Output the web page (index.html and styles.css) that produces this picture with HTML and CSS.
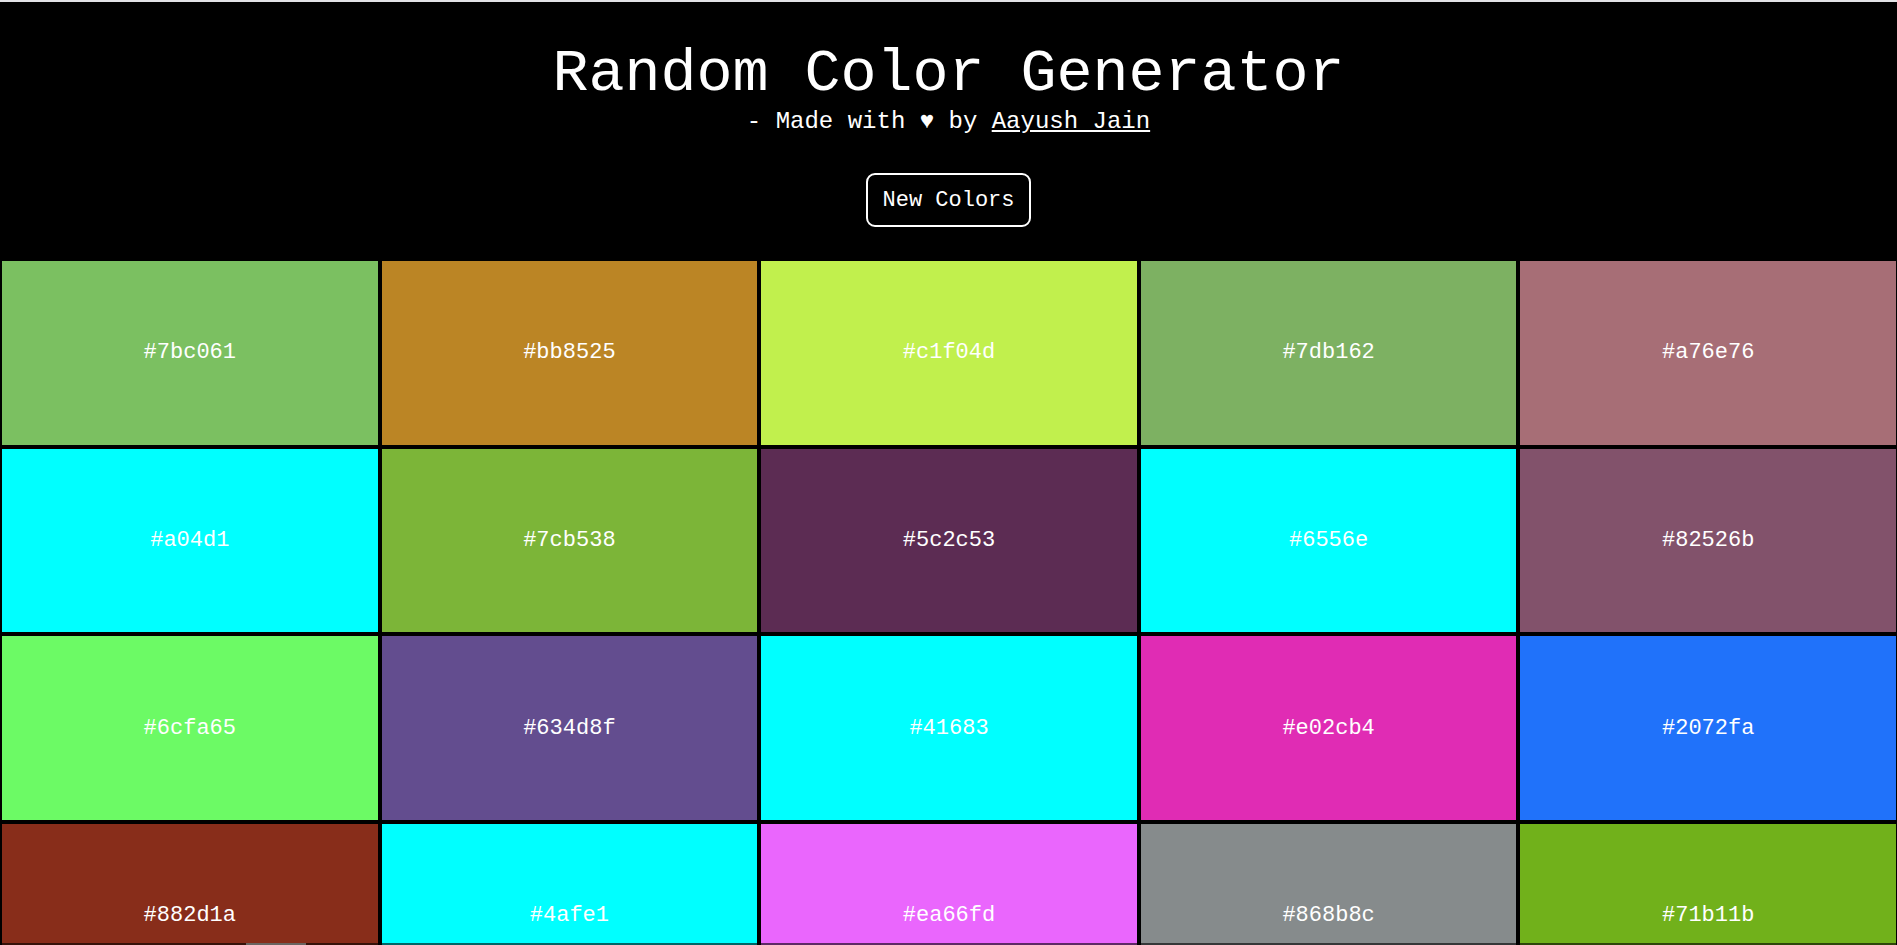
FILE: index.html
```html
<!DOCTYPE html>
<html lang="en">
<head>
<meta charset="utf-8">
<title>Random Color Generator</title>
<link rel="stylesheet" href="styles.css">
</head>
<body>
<header class="header">
  <h1 class="title">Random Color Generator</h1>
  <p class="subtitle">- Made with &#9829; by <a class="author" href="#">Aayush Jain</a></p>
  <button class="new-btn" type="button">New Colors</button>
</header>
<main class="grid">
  <div class="tile" style="background:#7bc061">#7bc061</div>
  <div class="tile" style="background:#bb8525">#bb8525</div>
  <div class="tile" style="background:#c1f04d">#c1f04d</div>
  <div class="tile" style="background:#7db162">#7db162</div>
  <div class="tile" style="background:#a76e76">#a76e76</div>
  <div class="tile" style="background:#00ffff">#a04d1</div>
  <div class="tile" style="background:#7cb538">#7cb538</div>
  <div class="tile" style="background:#5c2c53">#5c2c53</div>
  <div class="tile" style="background:#00ffff">#6556e</div>
  <div class="tile" style="background:#82526b">#82526b</div>
  <div class="tile" style="background:#6cfa65">#6cfa65</div>
  <div class="tile" style="background:#634d8f">#634d8f</div>
  <div class="tile" style="background:#00ffff">#41683</div>
  <div class="tile" style="background:#e02cb4">#e02cb4</div>
  <div class="tile" style="background:#2072fa">#2072fa</div>
  <div class="tile" style="background:#882d1a">#882d1a</div>
  <div class="tile" style="background:#00ffff">#4afe1</div>
  <div class="tile" style="background:#ea66fd">#ea66fd</div>
  <div class="tile" style="background:#868b8c">#868b8c</div>
  <div class="tile" style="background:#71b11b">#71b11b</div>
</main>
<div class="bottom-bar"><span class="bottom-thumb"></span></div>
</body>
</html>
```
FILE: styles.css
```css
html, body {
  margin: 0;
  padding: 0;
}
body {
  background: #000;
  color: #fff;
  font-family: "Courier New", "Liberation Mono", monospace;
  border-top: 2px solid #e2e2e6;
}
.header {
  display: flex;
  flex-direction: column;
  align-items: center;
  padding: 38px 0 34px;
}
.title {
  margin: 0;
  font-size: 60px;
  font-weight: normal;
  line-height: 68px;
  color: #fff;
}
.subtitle {
  margin: 0;
  font-size: 24px;
  line-height: 27px;
  color: #fff;
}
.author {
  color: #fff;
  text-decoration: underline;
}
.new-btn {
  margin-top: 38px;
  background: #000;
  color: #fff;
  border: 2px solid #fff;
  border-radius: 9px;
  padding: 13px 14px 11px;
  font-family: "Courier New", "Liberation Mono", monospace;
  font-size: 22px;
  line-height: 26px;
}
.grid {
  display: grid;
  grid-template-columns: repeat(5, 1fr);
  grid-auto-rows: 183.67px;
  gap: 4px;
  padding: 0 1px 0 2px;
}
.tile {
  display: flex;
  align-items: center;
  justify-content: center;
  color: #fff;
  font-size: 22px;
}
.bottom-bar {
  position: fixed;
  left: 0;
  right: 0;
  bottom: 0;
  height: 2px;
  background: rgba(0, 0, 0, 0.6);
}
.bottom-thumb {
  position: absolute;
  left: 246px;
  width: 60px;
  top: 0;
  height: 2px;
  background: #6a6460;
}
```
